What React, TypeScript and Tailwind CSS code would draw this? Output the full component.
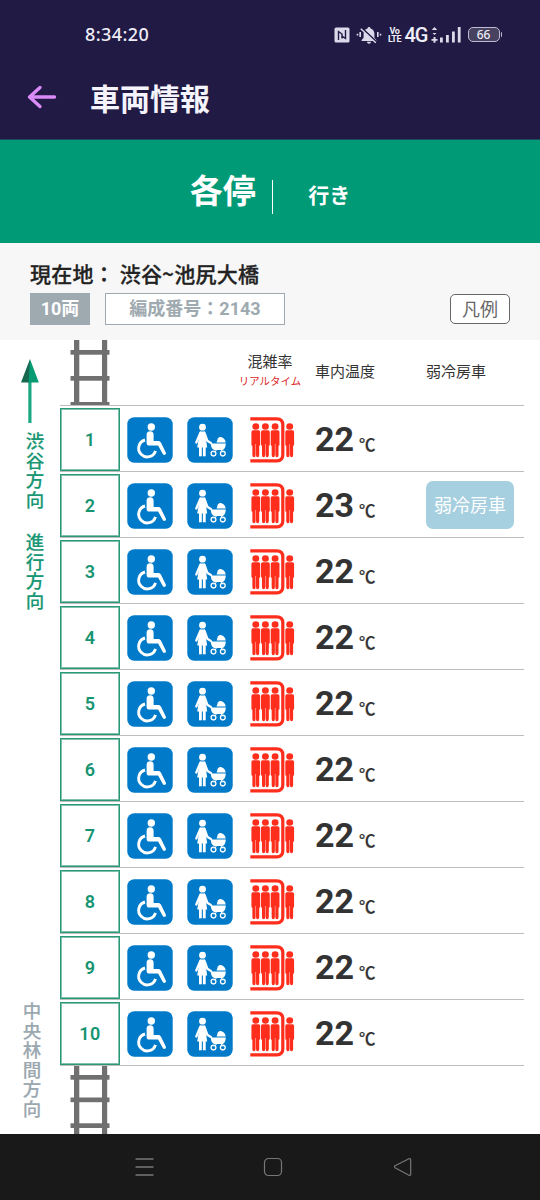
import { clsx } from "clsx";

interface Car {
  number: number;
  temperature: number;
  mildCooling?: boolean;
}

const cars: Car[] = [
  { number: 1, temperature: 22 },
  { number: 2, temperature: 23, mildCooling: true },
  { number: 3, temperature: 22 },
  { number: 4, temperature: 22 },
  { number: 5, temperature: 22 },
  { number: 6, temperature: 22 },
  { number: 7, temperature: 22 },
  { number: 8, temperature: 22 },
  { number: 9, temperature: 22 },
  { number: 10, temperature: 22 },
];

function StatusBar() {
  return (
    <div className="flex h-[69px] items-center pl-[85px] pr-[38px] text-[#efeef8]">
      <span className="-mt-px font-['Noto_Sans',sans-serif] text-[18px] leading-none font-medium tracking-[0.4px]">
        8:34:20
      </span>
      <div className="ml-auto flex items-center">
        <svg className="h-4 w-4" viewBox="0 0 16 16">
          <rect x="0.5" y="0.5" width="15" height="15" rx="1.5" fill="#dcdaea" />
          <path d="M4.500 13V4.500L8 7v4.500M11.500 3v8.500L8 9" fill="none" stroke="#201a45" strokeWidth="1.400" />
        </svg>
        <svg className="ml-1.5 h-5 w-[26px]" viewBox="0 0 26 20">
          <path
            d="M13 2a1.5 1.5 0 0 1 1.5 1.400c2.600.7 3.900 2.700 3.900 5.300v4l2 2.300v1H5.600v-1l2-2.300v-4c0-2.600 1.300-4.600 3.900-5.300A1.500 1.500 0 0 1 13 2zM11 16.800h4a2 2 0 0 1-4 0z"
            fill="#dcdaea"
          />
          <path d="M6 3.500l15 14" stroke="#201a45" strokeWidth="2.200" />
          <path d="M4.800 3.800l15 14" stroke="#dcdaea" strokeWidth="1.500" />
          <path d="M4.200 7v5M21.800 7v5M1.500 8.800v1.600M24.500 8.800v1.600" stroke="#dcdaea" strokeWidth="1.600" />
        </svg>
        <div className="ml-[7px] flex w-3 flex-col items-center font-['Roboto',sans-serif] text-[9px] leading-[8px] font-bold tracking-[-0.5px]">
          <span>Vo</span>
          <span>LTE</span>
        </div>
        <span className="ml-[4px] w-[25px] font-['Roboto',sans-serif] text-[20px] leading-none font-medium tracking-[-1px]">
          4G
        </span>
        <svg className="ml-px h-[18px] w-[30px]" viewBox="0 0 30 18" fill="#dcdaea">
          <path d="M3.500 1l2.800 3H.7zM3.500 9L1.500 7h4zM2.500 11h2v2h2v1.800h-2v2h-2v-2h-2V13h2z" />
          <rect x="9" y="11.500" width="2.800" height="5" />
          <rect x="15" y="9" width="2.800" height="7.500" />
          <rect x="21" y="5.500" width="2.800" height="11" />
          <rect x="26.800" y="1" width="2.800" height="15.500" />
        </svg>
        <div className="ml-[7px] flex h-[15px] w-8 items-center justify-center rounded-[5px] border-[1.5px] border-[#bdbbd2] bg-[#47425f] font-['Noto_Sans',sans-serif] text-[12px] leading-none font-medium">
          66
        </div>
        <div className="ml-px h-[5px] w-[1.5px] rounded-r bg-[#bdbbd2]" />
      </div>
    </div>
  );
}

function AppBar() {
  return (
    <div className="flex h-[70px] items-start pl-[27px]">
      <svg className="mt-[16px] h-6 w-[30px]" viewBox="0 0 30 24">
        <path
          d="M13 2.500L2.500 12 13 21.500M3 12h24.500"
          fill="none"
          stroke="#d98cf8"
          strokeWidth="3.400"
          strokeLinecap="round"
          strokeLinejoin="round"
        />
      </svg>
      <h1 className="ml-[33px] mt-[10px] text-[30px] leading-[36px] font-bold text-[#f5f3fb]">車両情報</h1>
    </div>
  );
}

function Rail({ ties }: { ties: number[] }) {
  return (
    <svg className="h-full w-10" viewBox="0 0 40 68" preserveAspectRatio="xMidYMin slice" fill="#707070">
      <rect x="4" y="0" width="5.300" height="68" />
      <rect x="32" y="0" width="5.200" height="68" />
      {ties.map((y) => (
        <rect key={y} x="0.500" y={y} width="39" height="4.700" />
      ))}
    </svg>
  );
}

function WheelchairIcon() {
  return (
    <svg className="h-[46px] w-[46px]" viewBox="0 0 46 46">
      <rect x="0.300" y="0.300" width="45.400" height="45.400" rx="7" fill="#007ac9" />
      <circle cx="24.300" cy="10" r="3.700" fill="#fff" />
      <path
        d="M19.600 17.800a3.500 3.500 0 0 1 7 0v6.200h4.600c1.300 0 2.100.5 2.700 1.600l4.900 9.900c.9 2-1.900 3.400-3 1.500l-4.700-8.400h-8.700c-1.800 0-2.800-1-2.800-2.600z"
        fill="#fff"
      />
      <path d="M18 23a8.600 8.600 0 1 0 10.500 10.800" fill="none" stroke="#fff" strokeWidth="2.900" />
    </svg>
  );
}

function StrollerIcon() {
  return (
    <svg className="h-[46px] w-[46px]" viewBox="0 0 46 46">
      <rect x="0.300" y="0.300" width="45.400" height="45.400" rx="7" fill="#007ac9" />
      <g fill="#fff">
        <circle cx="15.500" cy="10.200" r="3.400" />
        <path d="M13 14.500h4.800l2.400 16H10.200z" />
        <rect x="12" y="30" width="2.800" height="9.300" />
        <rect x="15.900" y="30" width="2.800" height="9.300" />
        <path d="M23.800 26.400h15c-.1 3.200-1.200 5.600-3.300 6.700h-8.400c-2.100-1.200-3.200-3.400-3.300-6.700z" />
        <path d="M29.600 25.400l1.200-3.800c.9-1.400 2.300-1.900 3.700-1.400 2.500.8 4 2.600 4.200 5.200z" />
      </g>
      <path
        d="M13.400 15.800L9.300 25.500M17.500 15.800l2.800 7.900 3.800 2.400"
        fill="none"
        stroke="#fff"
        strokeWidth="2.300"
        strokeLinecap="round"
        strokeLinejoin="round"
      />
      <path d="M29.500 33l-2.500 2.500M34 33l2 2.500" stroke="#fff" strokeWidth="1" />
      <g fill="none" stroke="#fff" strokeWidth="1.300">
        <circle cx="26.500" cy="36.600" r="2.400" />
        <circle cx="35.800" cy="36.600" r="2.400" />
      </g>
    </svg>
  );
}

function CrowdIcon() {
  return (
    <svg className="h-[46px] w-[45px]" viewBox="0 0 45 46" fill="#ff2d1b">
      <path d="M.3 1.800h26.500q6 0 6 6v30q0 6-6 6H.3" fill="none" stroke="#ff2d1b" strokeWidth="3.200" />
      {[5.800, 15.400, 25.100, 39.700].map((x) => (
        <g key={x} transform={`translate(${x} 0) scale(1.07 1)`}>
          <circle cx="0" cy="9.500" r="3.200" />
          <path d="M-2.600 13.200h5.200q1.500 0 1.500 1.700v12.600q0 1.300-.9 1.300v9.200q0 2.200-1.500 2.200t-1.500-2.200V27h-.4v11q0 2.200-1.500 2.200t-1.500-2.200v-9.200q-.9 0-.9-1.300V14.900q0-1.700 1.500-1.700z" />
        </g>
      ))}
    </svg>
  );
}

function CarRow({ car }: { car: Car }) {
  return (
    <div className="flex h-[66px] border-b border-[#bdbdbd]">
      <div className="mt-[2px] flex h-[63px] w-[60px] items-center justify-center border-[1.5px] border-[#2b9878] pb-px font-['Roboto',sans-serif] text-[18px] font-semibold tracking-[0.4px] text-[#179471] outline-[0.5px] -outline-offset-2 outline-[#2b9878]/60">
        {car.number}
      </div>
      <div className="ml-[7px] mt-[10.5px] flex h-[46px]">
        <WheelchairIcon />
        <div className="ml-[14px]">
          <StrollerIcon />
        </div>
        <div className="ml-[17px]">
          <CrowdIcon />
        </div>
      </div>
      <div className="ml-[20px] flex w-[111px] items-baseline pt-[13px] text-[#333]">
        <span className="font-['Roboto',sans-serif] text-[34px] leading-[40px] font-bold">{car.temperature}</span>
        <span className="ml-[5px] text-[16.5px] leading-none font-medium [-webkit-text-stroke:0.2px]">℃</span>
      </div>
      {car.mildCooling && (
        <div className="mt-[9px] flex h-12 w-[88px] items-center justify-center rounded-[7px] bg-[#a6cfdf] pb-[2px] text-[18px] text-white">
          弱冷房車
        </div>
      )}
    </div>
  );
}

function Directions() {
  const vertical =
    "[writing-mode:vertical-rl] w-5 text-[18.5px] leading-[20px] font-medium tracking-[1px] [-webkit-text-stroke:0.15px]";

  return (
    <div className="flex w-[60px] flex-col">
      <svg className="mt-[19px] ml-5 h-16 w-5" viewBox="0 0 20 64">
        <rect x="8.300" y="22" width="3.200" height="42" fill="#1ba883" />
        <path d="M10 0L1 23.500h9z" fill="#17684f" />
        <path d="M10 0l8.800 23.500H8.500z" fill="#079b74" />
      </svg>
      <div className={clsx(vertical, "ml-[25px] mt-[9px] h-[101px] text-[#199774]")}>渋谷方向</div>
      <div className={clsx(vertical, "ml-[25px] h-[80px] text-[#199774]")}>進行方向</div>
      <div className={clsx(vertical, "mt-auto mb-[15px] ml-[22px] text-[#9ba8b0]")}>中央林間方向</div>
    </div>
  );
}

function TrainTable() {
  return (
    <div className="flex h-[794px] bg-white">
      <Directions />
      <div className="w-[464px]">
        <div className="flex h-[66px] border-b border-[#bdbdbd] text-[15px] text-[#333]">
          <div className="ml-[10px] h-[65px] w-10">
            <Rail ties={[10, 36, 62]} />
          </div>
          <div className="ml-[128px] w-[64px] pt-[11px] text-center leading-[20px]">
            <p>混雑率</p>
            <p className="pt-px text-[10.5px] leading-[18px] whitespace-nowrap text-[#dc2929]">リアルタイム</p>
          </div>
          <p className="ml-[13px] w-[111px] pt-[21px] leading-[20px]">車内温度</p>
          <p className="pt-[21px] leading-[20px]">弱冷房車</p>
        </div>
        {cars.map((car) => (
          <CarRow key={car.number} car={car} />
        ))}
        <div className="ml-[10px] h-[68px]">
          <Rail ties={[9, 31.500, 57.300]} />
        </div>
      </div>
    </div>
  );
}

function NavBar() {
  return (
    <div className="h-[66px] bg-[#191919] pt-[23px]">
      <div className="ml-[134px] flex w-[280px] items-center justify-between">
        <svg className="h-5 w-5" viewBox="0 0 20 20" stroke="#777" strokeWidth="1.300">
          <path d="M1.500 2h18M1.500 10h18M1.500 18h18" />
        </svg>
        <svg className="-ml-[2px] h-5 w-5" viewBox="0 0 20 20" fill="none" stroke="#777" strokeWidth="1.200">
          <rect x="1.500" y="1.500" width="17" height="17" rx="4" />
        </svg>
        <svg className="h-5 w-5" viewBox="0 0 20 20" fill="none" stroke="#777" strokeWidth="1.200">
          <path d="M15 1.800L1 8.800q-1.200 1 0 2l14 7.400q1.700.6 1.700-1.200V3q0-1.800-1.700-1.200z" />
        </svg>
      </div>
    </div>
  );
}

export default function App() {
  return (
    <div className="h-[1200px] w-[540px] overflow-hidden bg-white font-['Noto_Sans_CJK_JP',sans-serif]">
      <header className="h-[140px] border-b border-[#1d4a5c] bg-[#201a45]">
        <StatusBar />
        <AppBar />
      </header>

      <div className="flex h-[103px] justify-center bg-[#009a77] text-white">
        <span className="mt-[25px] text-[33px] leading-[48px] font-bold">各停</span>
        <span className="ml-[16px] mt-[40px] h-[34px] w-[1.5px] bg-white" />
        <span className="ml-[35px] mt-[39px] text-[21px] leading-[30px] font-bold">行き</span>
      </div>

      <section className="h-[97px] bg-[#f7f7f7] px-[30px] pt-[16px]">
        <p className="text-[21px] leading-[28px] font-medium tracking-[0.2px] text-[#222] [-webkit-text-stroke:0.3px]">
          現在地： 渋谷~池尻大橋
        </p>
        <div className="mt-[6px] flex">
          <span className="flex h-8 w-[60px] items-center justify-center bg-[#9eaab0] font-['Roboto','Noto_Sans_CJK_JP',sans-serif] text-[18px] leading-none font-bold text-white">
            10両
          </span>
          <span className="ml-[15px] flex h-8 w-[180px] items-center justify-center border-[1.5px] border-[#9eaab0] bg-white font-['Roboto','Noto_Sans_CJK_JP',sans-serif] text-[18px] leading-none font-bold text-[#9eaab0]">
            編成番号：2143
          </span>
          <button className="ml-auto mt-px flex h-[30px] w-[60px] items-center justify-center rounded-[5px] border-[1.5px] border-[#666] bg-white pb-[2px] text-[18px] leading-none text-[#666]">
            凡例
          </button>
        </div>
      </section>

      <TrainTable />
      <NavBar />
    </div>
  );
}
